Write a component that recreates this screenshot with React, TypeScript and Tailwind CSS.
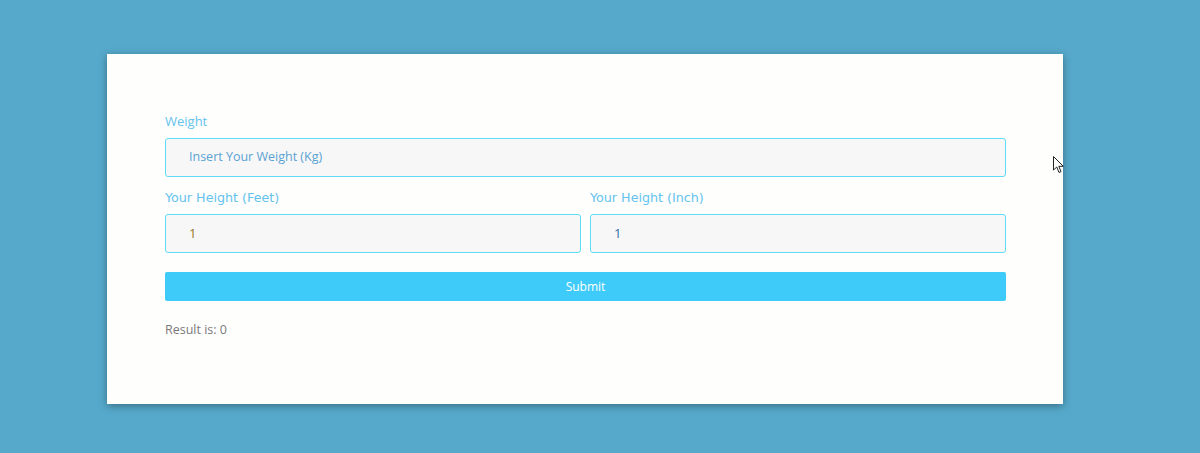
export default function App() {
  return (
    <div className="relative h-[453px] w-[1200px] overflow-hidden bg-[#56a9cb] pt-[54px] pl-[107px] font-['Open_Sans',sans-serif]">
      <div className="h-[350px] w-[956px] bg-[#fefefd] pl-[58px] pr-[57px] pt-[58px] shadow-[0_2px_8px_rgba(0,0,0,0.35)]">
        <label className="block text-[13px] leading-[18px] text-[#63c3ee]">Weight</label>
        <div className="mt-[8px] flex h-[39px] items-center rounded-[3px] border border-[#5fdcf7] bg-[#f7f7f7] pl-[23px] text-[12.5px] text-[#5aa2d4]">
          Insert Your Weight (Kg)
        </div>
        <div className="mt-[12px] grid grid-cols-2 gap-[9px]">
          <div>
            <label className="block font-['DejaVu_Sans',sans-serif] text-[12.7px] leading-[18px] text-[#63c3ee]">
              Your Height (Feet)
            </label>
            <div className="mt-[7px] flex h-[39px] items-center rounded-[3px] border border-[#5fdcf7] bg-[#f7f7f7] pl-[23px] text-[13px] text-[#9a7a2a]">
              1
            </div>
          </div>
          <div>
            <label className="block font-['DejaVu_Sans',sans-serif] text-[12.7px] leading-[18px] text-[#63c3ee]">
              Your Height (Inch)
            </label>
            <div className="mt-[7px] flex h-[39px] items-center rounded-[3px] border border-[#5fdcf7] bg-[#f7f7f7] pl-[23px] text-[13px] text-[#2a6fa8]">
              1
            </div>
          </div>
        </div>
        <button className="mt-[19px] flex h-[29px] w-full items-center justify-center rounded-[2px] bg-[#3fcbf9] text-[12px] text-white">
          Submit
        </button>
        <p className="mt-[20px] text-[12.5px] leading-[18px] text-[#7a7a7a]">Result is: 0</p>
      </div>
      <svg className="absolute left-[1053px] top-[156px]" width="12" height="18" viewBox="0 0 12 18">
        <path d="M0.5 0.5 L0.5 14 L3.8 11 L6 16.5 L8 15.6 L5.8 10.3 L10.3 10.3 Z" fill="#fff" stroke="#222" strokeWidth="1" />
      </svg>
    </div>
  );
}
